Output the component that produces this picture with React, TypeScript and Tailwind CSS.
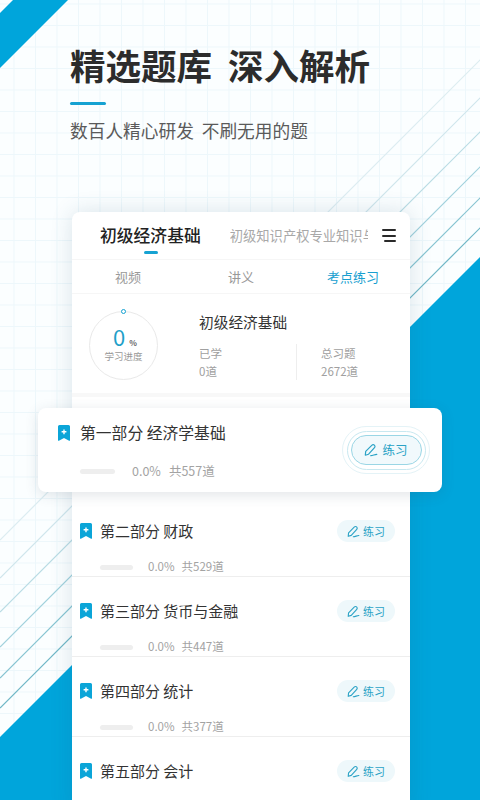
const cjk = { fontFamily: '"Noto Sans CJK SC", "Noto Sans", sans-serif' };

function Bookmark({ className }: { className: string }) {
  return (
    <svg viewBox="0 0 12 16" className={className}>
      <path d="M1.5 0h9A1.5 1.5 0 0 1 12 1.5V15.2c0 .5-.5.7-.9.5L6 13 .9 15.7c-.4.2-.9 0-.9-.5V1.5A1.5 1.5 0 0 1 1.5 0z" fill="#0ba5d8" />
      <path d="M6 4.4v4.8M3.6 6.8h4.8" stroke="#fff" strokeWidth="1.4" />
    </svg>
  );
}

function Pen({ className }: { className: string }) {
  return (
    <svg viewBox="0 0 14 14" fill="none" stroke="#2ba3c6" strokeWidth="1.2" strokeLinejoin="round" strokeLinecap="round" className={className}>
      <path d="M1.3 12.2 1.7 8.4 8 2.1a1.6 1.6 0 0 1 2.3 0l.2.2a1.6 1.6 0 0 1 0 2.3L4.6 11.2z" />
      <path d="M6.8 12.6c2-.1 3.4-.9 6-1.3" />
    </svg>
  );
}

function Background() {
  const lines = [
    [540, '#dcedf1'],
    [578, '#cfe6ec'],
    [612, '#b9dce4'],
    [647, '#a0d1dc'],
    [678, '#86c4d1'],
    [708, '#6fb7c6'],
  ] as const;
  const v = Array.from({ length: 23 }, (_, i) => i * 21.5 + 14);
  const h = Array.from({ length: 38 }, (_, i) => i * 21.5 + 4);
  return (
    <svg viewBox="0 0 480 800" className="absolute inset-0 w-[480px] h-[800px]">
      {v.map((x) => <path key={x} d={`M${x} 0V800`} stroke="#edf7fb" strokeWidth="1" />)}
      {h.map((y) => <path key={y} d={`M0 ${y}H480`} stroke="#edf7fb" strokeWidth="1" />)}
      {lines.map(([c, col]) => <path key={c} d={`M0 ${c}L${c} 0`} stroke={col} strokeWidth="1.2" />)}
      <path d="M13 0H68L0 68V13z" fill="#00a5db" />
      <path d="M0 737L480 257V800H0z" fill="#00a5db" />
    </svg>
  );
}

function Row({ title, total, last, first }: { title: string; total?: string; last?: boolean; first?: boolean }) {
  return (
    <div className={`h-[80px] pl-2 pr-[15px] flex flex-col ${first ? 'mt-[5px]' : ''} ${last ? '' : 'border-b border-[#eeeeee]'}`}>
      <div className="flex items-center h-[22px] mt-[23px]">
        <Bookmark className="w-3 h-4" />
        <span className="ml-2 text-[15px] leading-[22px] text-[#333333]">{title}</span>
        <span className="ml-auto w-[58px] h-[22px] rounded-full bg-[#eef8fb] flex items-center justify-center gap-[3px]">
          <Pen className="w-[13px] h-[13px]" />
          <span className="text-[11px] text-[#2ba3c6]">练习</span>
        </span>
      </div>
      {total && (
        <div className="flex items-center h-[16px] mt-[17px] pl-5">
          <span className="w-[33px] h-[5px] rounded-full bg-[#eeeeee]" />
          <span className="ml-[15px] text-[11.5px] text-[#a3a3a3]">0.0%</span>
          <span className="ml-[7px] text-[11.5px] text-[#a3a3a3]">共{total}道</span>
        </div>
      )}
    </div>
  );
}

export default function App() {
  return (
    <div className="relative w-[480px] h-[800px] overflow-hidden bg-[#fbfeff]" style={cjk}>
      <Background />
      <div className="relative pt-[39px]">
        <div className="pl-[70px]">
          <h1 className="text-[35.5px] leading-[52px] font-bold text-[#2c2c2c] whitespace-pre">精选题库  深入解析</h1>
          <div className="w-9 h-[3px] mt-[11px] rounded-full bg-[#16a2d2]" />
          <p className="mt-[12px] text-[17.7px] leading-[26px] text-[#5a5a5a] whitespace-pre">数百人精心研发  不刷无用的题</p>
        </div>

        <div className="ml-[72px] mt-[69px] w-[338px] h-[600px] rounded-t-[8px] bg-white shadow-[0_0_22px_rgba(40,90,120,0.16)]">
          <div className="h-[48px] flex items-center border-b border-[#f6f6f6]">
            <div className="relative ml-7 text-[16.8px] font-medium text-[#222222] whitespace-nowrap">
              初级经济基础
              <span className="absolute left-[44px] top-[28px] w-[14px] h-[3px] rounded-full bg-[#16a2d2]" />
            </div>
            <div className="ml-[29px] w-[138px] overflow-hidden whitespace-nowrap text-[13.3px] text-[#a8a8a8]">初级知识产权专业知识与实务</div>
            <div className="ml-[14px] w-[14px] flex flex-col gap-[3.5px]">
              <span className="h-[2px] bg-[#2a2a2a] rounded-full" />
              <span className="h-[2px] bg-[#2a2a2a] rounded-full" />
              <span className="h-[2px] ml-[2px] bg-[#2a2a2a] rounded-full" />
            </div>
          </div>
          <div className="h-[34px] flex items-center border-b border-[#f6f6f6] text-[13px] text-[#999999]">
            <span className="ml-[43px]">视频</span>
            <span className="ml-[87px]">讲义</span>
            <span className="ml-[73px] text-[#1a9fd0]">考点练习</span>
          </div>
          <div className="h-[99px] flex">
            <div className="relative ml-[17px] mt-[17px] w-[69px] h-[69px] rounded-full border border-[#e9e9e9] flex flex-col items-center">
              <span className="absolute left-[31px] -top-[3px] w-[5px] h-[5px] rounded-full border border-[#16a2d2] bg-white" />
              <div className="flex items-baseline mt-[11px] ml-[3px] h-[26px] leading-[26px]">
                <span className="text-[22px] text-[#1f9fc9]">0</span>
                <span className="ml-[4px] text-[8px] font-bold text-[#666666]">%</span>
              </div>
              <span className="text-[9.5px] leading-[14px] text-[#999999]">学习进度</span>
            </div>
            <div className="ml-[41px] mt-[17px] flex-1">
              <div className="text-[14.7px] leading-[22px] text-[#333333]">初级经济基础</div>
              <div className="flex mt-[11px]">
                <div className="w-[98px] h-[36px] border-r border-[#eeeeee] text-[11.5px] leading-[18px] text-[#a0a0a0]">
                  <div>已学</div>
                  <div>0道</div>
                </div>
                <div className="ml-[24px] text-[11.5px] leading-[18px] text-[#a0a0a0]">
                  <div>总习题</div>
                  <div>2672道</div>
                </div>
              </div>
            </div>
          </div>
          <div className="h-[4px] bg-[#f8f8f8]" />

          <div className="relative -ml-[34px] mt-[11px] w-[404px] h-[84px] rounded-[8px] bg-white shadow-[0_3px_14px_rgba(50,70,90,0.14)] pl-[20px] pr-[19px] flex flex-col">
            <div className="flex items-center h-[20px] mt-[15px]">
              <Bookmark className="w-3 h-4" />
              <span className="ml-[10px] text-[15.8px] leading-[20px] text-[#333333]">第一部分 经济学基础</span>
            </div>
            <div className="flex items-center h-[16px] mt-[20px] pl-[22px]">
              <span className="w-[35px] h-[5px] rounded-full bg-[#eeeeee]" />
              <span className="ml-[17px] text-[12.5px] text-[#a3a3a3]">0.0%</span>
              <span className="ml-[8px] text-[12.5px] text-[#a3a3a3]">共557道</span>
            </div>
            <div className="absolute right-[12px] top-[18px] w-[88px] h-[48px] rounded-full border border-[#e4f3f7] flex items-center justify-center">
              <div className="w-[79px] h-[39px] rounded-full border border-[#c8e8f0] flex items-center justify-center">
                <div className="w-[71px] h-[30px] rounded-full border border-[#9ad6e5] bg-[#f1f9fc] flex items-center justify-center gap-1">
                  <Pen className="w-[14px] h-[14px]" />
                  <span className="text-[12.5px] text-[#2ba3c6]">练习</span>
                </div>
              </div>
            </div>
          </div>

          <Row first title="第二部分 财政" total="529" />
          <Row title="第三部分 货币与金融" total="447" />
          <Row title="第四部分 统计" total="377" />
          <Row title="第五部分 会计" last />
        </div>
      </div>
    </div>
  );
}
